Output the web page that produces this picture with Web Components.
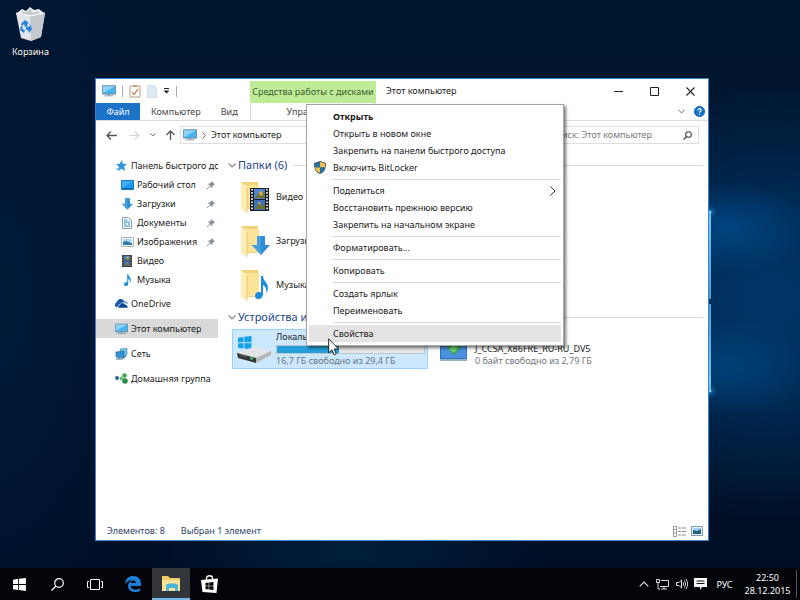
<!DOCTYPE html>
<html lang="ru">
<head>
<meta charset="utf-8">
<title>Этот компьютер</title>
<style>
html,body{height:100%;margin:0}
body{font:9px/12px "Noto Sans","Open Sans",sans-serif;color:#1a1a1a;overflow:hidden}
</style>
</head>
<body>
<win-desktop>
  <desktop-icon slot="icons" icon="bin">Корзина</desktop-icon>
  <explorer-window slot="windows"></explorer-window>
  <context-menu slot="menu">
    <menu-item strong>Открыть</menu-item>
    <menu-item>Открыть в новом окне</menu-item>
    <menu-item>Закрепить на панели быстрого доступа</menu-item>
    <menu-item icon="shield">Включить BitLocker</menu-item>
    <menu-line></menu-line>
    <menu-item submenu>Поделиться</menu-item>
    <menu-item>Восстановить прежнюю версию</menu-item>
    <menu-item>Закрепить на начальном экране</menu-item>
    <menu-line></menu-line>
    <menu-item>Форматировать...</menu-item>
    <menu-line></menu-line>
    <menu-item>Копировать</menu-item>
    <menu-line></menu-line>
    <menu-item>Создать ярлык</menu-item>
    <menu-item>Переименовать</menu-item>
    <menu-line></menu-line>
    <menu-item active>Свойства</menu-item>
  </context-menu>
  <ui-icon slot="cursor" name="cursor"></ui-icon>
  <task-bar slot="taskbar"></task-bar>
</win-desktop>
<script>
const folder = '<path d="M1 1h17v27H6z" fill="#f3d377"/><path d="M5 4h14v23H5z" fill="#fbe39a"/><path d="M1 1l6 5v26l-6-4z" fill="#ffeeb4"/><path d="M7 6v26" stroke="#e2bd5c" stroke-width=".7"/>';
const film = '<path d="M0 0h19v23H0z" fill="#1c1d22"/><path d="M4 1h11v10H4z" fill="#4d86cf"/><path d="M4 12h11v10H4z" fill="#3d72bd"/><path d="M5 10l3-4 3 1 3-4 1 7zM5 21l3-5 4 2 3-3v6z" fill="#6f7434"/><path d="M9 4l3-1 1 4-3 1zM7 15l3-1 1 3z" fill="#e0a63c"/><path d="M2 1v21M17 1v21" stroke="#e6e6e6" stroke-width="1.8" stroke-dasharray="1.6 1.5"/>';
const note = '<path d="M6 0h2c0 5 5 6 5 12 0 2-1 4-2 5 1-5-1-7-3-8v9c0 3-2 5-5 5-4 0-4-6 0-7 1 0 2 0 3 .5z" fill="#1c8ddb"/>';
const monitor = '<path d="M.5.5h15v9.500H.5z" fill="#44b3ef" stroke="#6b8394"/><path d="M1 1h14L1 9z" fill="#8bd5fb"/><path d="M7 10h2v1.500H7z" fill="#8698a4"/><path d="M3 12h10" stroke="#7d909e"/>';
const down = '<path d="M5 0h8v9h5l-9 10L0 9h5z" fill="#318dd3"/><path d="M5 0h4v19L0 9h5z" fill="#439fe2"/>';
const winlogo = '<path d="M0 2l6-1v6H0zM7 .9L15 0v7H7zM0 8h6v6l-6-1zM7 8h8v7l-8-1z"/>';
const ICONS = {
 bin:[32,36,'<path d="M2 7l5-4 4 2 4-4 4 3 5-1 5 4-2 4H4z" fill="#eef0f2"/><path d="M7 5l5 1 3-4 3 5 5-2 3 3-9 3-9-1z" fill="#c7ccd2"/><path d="M1 7l14 3 15-3-4 24-10 4-10-3z" fill="#e2e5e9"/><path d="M15 10l15-3-4 24-10 4z" fill="#c4c9d0"/><path d="M1 7l14 3 15-3" fill="none" stroke="#fff"/><path d="M6 18l4-4 4 3-2 1 1 2-3 1-1-3-2 2zM15 18l2 5-3 4-1-3h-2v-3h3zM6 20l2 1-1 2 3 1-1 3-4-3z" fill="#2484d6"/>'],
 monitor:[16,13,monitor],
 props:[12,13,'<path d="M1 1h10v11H1z" fill="#fff" stroke="#b59c86"/><path d="M4 0h4v2H4z" fill="#b6a48f"/><path d="M3 7l2 2.500L9 4" fill="none" stroke="#c97240" stroke-width="1.200"/>'],
 blank:[10,13,'<path d="M.5.5h7l2 2v10h-9z" fill="#dce8f2" stroke="#cfdbe6"/>'],
 drop:[7,6,'<path d="M1 .5h5" stroke="#222"/><path d="M.5 2.500h6l-3 3z" fill="#222"/>'],
 min:[9,9,'<path d="M0 4.500h9" stroke="#222"/>'],
 max:[9,9,'<path d="M.5.5h8v8h-8z" fill="none" stroke="#222"/>'],
 close:[9,9,'<path d="M.5.5l8 8M8.500.5l-8 8" stroke="#222" stroke-width="1.100"/>'],
 chev:[8,5,'<path d="M.5.5L4 4l3.500-3.500" fill="none" stroke="#888" stroke-width="1.200"/>'],
 chevr:[4,7,'<path d="M.5.5l3 3-3 3" fill="none" stroke="#666"/>'],
 sub:[6,10,'<path d="M.5.5L5 5 .5 9.500" fill="none" stroke="#333"/>'],
 help:[12,12,'<circle cx="6" cy="6" r="5.500" fill="#1775cc" stroke="#0c5ba6"/><path d="M4.200 4.700c0-2.500 3.600-2.300 3.600-.2 0 1.300-1.800 1.200-1.800 2.700M6 8.300v1.300" fill="none" stroke="#fff" stroke-width="1.200"/>'],
 back:[11,9,'<path d="M11 4.500H1M5 .5l-4 4 4 4" fill="none" stroke="#555" stroke-width="1.300"/>'],
 fwd:[11,9,'<path d="M0 4.500h10M6 .5l4 4-4 4" fill="none" stroke="#d4d4d4" stroke-width="1.200"/>'],
 smallchev:[6,4,'<path d="M.5.5L3 3 5.500.5" fill="none" stroke="#777"/>'],
 up:[9,10,'<path d="M4.500 10V1M.5 5l4-4 4 4" fill="none" stroke="#555" stroke-width="1.300"/>'],
 search:[9,9,'<circle cx="5.500" cy="3.500" r="2.800" fill="none" stroke="#444" stroke-width="1.100"/><path d="M3.500 5.500L.5 8.500" stroke="#444" stroke-width="1.300"/>'],
 star:[12,12,'<path d="M6 0l1.800 4 4.200.3-3.200 2.900L10 12 6 9.500 2.200 12l1-4.800L0 4.500 4.300 4z" fill="#2f93de"/><path d="M0 10h4" stroke="#2f93de"/>'],
 desk:[13,10,'<path d="M.5.5h12v9H.5z" fill="#1d9af0" stroke="#1479c4"/><path d="M1 1h11L1 8z" fill="#3fb0f8"/><path d="M1 8.500h11" stroke="#0d69ad"/>'],
 down:[18,19,down],
 doc:[10,12,'<path d="M.5.5h6l3 3v8h-9z" fill="#f2f8fc" stroke="#8ba2b3"/><path d="M2 3h3M2 5h6M2 7h2M2 9h6M6 7h2" stroke="#3a8cc8"/>'],
 image:[13,10,'<path d="M.5.5h12v9H.5z" fill="#fff" stroke="#a5b1ba"/><path d="M2 2h9v3H2z" fill="#a8d8f4"/><path d="M2 5l3-1 6 2v2H2z" fill="#3277a6"/>'],
 film:[19,23,film],
 note:[13,23,note],
 cloud:[13,9,'<path d="M2 8C-1 7 0 4 2 4c0-4 6-5 7-1 2-.5 3 1 3 2" fill="none" stroke="#0d4fa0"/><path d="M2 4c0-4 6-5 7-1L4 6 2 8C-1 7 0 4 2 4z" fill="#1659a9"/><path d="M4 9C2 8.500 3 6 5 6c0-2.500 4-3 5-.5 2-.5 4 3 2 3.500z" fill="#0b4695" stroke="#fff" stroke-width=".5"/>'],
 net:[13,12,'<path d="M5 1l7-1v7l-4 1z" fill="#7cc3ea" stroke="#3a83b3" stroke-width=".6"/><path d="M1 4l8-1v6.500L1 9z" fill="#2e93d4" stroke="#276e9f" stroke-width=".7"/><path d="M4 9v2M1 11h6l4-3" stroke="#477b9b" stroke-width="1.200" fill="none"/>'],
 group:[13,11,'<circle cx="2" cy="5" r="1.900" fill="#1c5f9c"/><circle cx="9.500" cy="2.500" r="2.300" fill="#41a559"/><circle cx="10" cy="8" r="2.800" fill="#2a8e49"/><circle cx="6.500" cy="5.500" r="2" fill="#6fbf72"/>'],
 pin:[8,8,'<path d="M4.500 0L8 3.500l-1 .3-1.500 1.500-.3 2L.8 2.800l2-.3L4.300 1z" fill="#8a9097"/><path d="M2.800 5.200L0 8" stroke="#8a9097"/>'],
 fvideo:[30,32,folder+'<g transform="translate(10 7)">'+film+'</g>'],
 fdown:[30,32,folder+'<g transform="translate(12 11)">'+down+'</g>'],
 fmusic:[30,32,folder+'<g transform="translate(15 7)">'+note+'</g>'],
 drive:[34,27,'<g transform="translate(1 0) scale(.9)" fill="#15a3e8">'+winlogo+'</g><path d="M0 17l16-6 18 4-15 8z" fill="#e3e4e5"/><path d="M0 17l19 5v5L1 22z" fill="#333537"/><path d="M19 22l15-7v4l-15 8z" fill="#b4b6b8"/><path d="M13 21l3 1v2l-3-1z" fill="#38d05b"/><path d="M3 19l7 2" stroke="#666"/>'],
 dvd:[27,24,'<path d="M0 0h27v24H0z" fill="#2f72c4"/><path d="M1 1h25v20H1z" fill="#4a90dc"/><path d="M0 22h27v2H0z" fill="#9badc0"/><path d="M6 9l7-8 8 9-7 8z" fill="#37a651"/><path d="M9 12l5 4 4-5-4-4z" fill="#70cb6d"/>'],
 shield:[12,13,'<path d="M6 0l6 2c0 5-1 9-6 11C1 11 0 7 0 2z" fill="#4b5963"/><path d="M6 1v5.500H1C.8 5 1 3.500 1 2.500z" fill="#2170b0"/><path d="M6 1l5 1.500v4H6z" fill="#f1c243"/><path d="M1 6.500h5V12C3 11 1.500 9 1 6.500z" fill="#f1c243"/><path d="M6 6.500h5C10.500 9 9 11 6 12z" fill="#2170b0"/>'],
 details:[13,11,'<path d="M.5.5h3v10h-3zM.5 3.500h3M.5 7h3" fill="none" stroke="#999"/><path d="M5 2h3M9 2h4M5 5.500h3M9 5.500h4M5 9h3M9 9h4" stroke="#888"/>'],
 tiles:[12,10,'<path d="M.5.5h11v9H.5z" fill="#e8f4fc" stroke="#7f9db5"/><path d="M2 2h8v3H2z" fill="#9dd2f0"/><path d="M2 4l4 1 4-2v5H2z" fill="#245f85"/>'],
 win:[13,13,'<g transform="scale(.86)" fill="#fff">'+winlogo+'</g>'],
 find:[13,13,'<circle cx="8" cy="5" r="4.300" fill="none" stroke="#fff" stroke-width="1.200"/><path d="M5 8L.5 12.500" stroke="#fff" stroke-width="1.300"/>'],
 task:[16,11,'<path d="M3.500.5h9v10h-9zM2 2.500H.5v6H2M14 2.500h1.500v6H14" fill="none" stroke="#fff"/>'],
 edge:[16,16,'<path d="M0 8C1 2 4 0 8 0c5 0 8 3 8 8v2H5.500c.5 4 6 4.500 9.500 2v3c-5 2.500-12 .5-12-5C3 7 5 5 7.500 4 5 4 2 5.500 0 8zm5.500-1H11c0-3.500-5-3.500-5.500 0z" fill="#1a7fd9"/>'],
 explorer:[18,15,'<path d="M0 0h6l2 2h10v13H0z" fill="#f0cc66"/><path d="M0 4h18v11H0z" fill="#fbe294"/><path d="M4 9l2-1.500h8L16 9v6h-3v-3H7v3H4z" fill="#4bb6d9"/>'],
 store:[17,18,'<path d="M5.500 5V3c0-3 6-3 6 0v2" fill="none" stroke="#fff" stroke-width="1.300"/><path d="M0 5l17-1.500-1.500 14.500-14-1z" fill="#fff"/><g transform="translate(4.500 7) scale(.53)" fill="#000">'+winlogo+'</g>'],
 tchev:[10,6,'<path d="M.7 5.300L5 1l4.300 4.300" fill="none" stroke="#ddd" stroke-width="1.200"/>'],
 lan:[13,12,'<path d="M5 2.500h7.500v6H4M8 9v2M5 11h6" fill="none" stroke="#ddd"/><path d="M.5 1.500h3v3h-3zM2 4.500V11h2" fill="none" stroke="#ddd"/>'],
 vol:[12,12,'<path d="M.5 4.500H3L5.500 2v8L3 7.500H.5z" fill="none" stroke="#ddd"/><path d="M7 4q1.300 2 0 4M8.500 2.500q2.300 3.500 0 7M10 1q3.300 5 0 10" fill="none" stroke="#ccc"/>'],
 chat:[13,12,'<path d="M0 0h13v9H8l-2 3V9H0z" fill="#fff"/><path d="M2.500 3h8M2.500 5.500h8" stroke="#111"/>'],
 cursor:[12,18,'<path d="M.7.8v14l3.200-3 2.200 5 2.200-1-2.200-4.800h4.400z" fill="#fff" stroke="#111" stroke-width=".9"/>']
};
const RESET = '*,:host{box-sizing:border-box}button{font:inherit;color:inherit;background:none;border:0;margin:0;padding:0;text-align:left;white-space:nowrap}';
function define(tag, css, html){
  customElements.define(tag, class extends HTMLElement{
    constructor(){
      super();
      const t=document.createElement('template');
      t.innerHTML='<style>'+RESET+css+'</style>'+(typeof html==='function'?html(this):html);
      this.attachShadow({mode:'open'}).append(t.content.cloneNode(true));
    }
  });
}
define('ui-icon',':host{display:inline-flex;flex:none}svg{display:block}',e=>{
  const [w,h,body]=ICONS[e.getAttribute('name')];
  return `<svg width="${e.getAttribute('w')||w}" height="${e.getAttribute('h')||h}" viewBox="0 0 ${w} ${h}" aria-hidden="true">${body}</svg>`;
});
define('win-desktop',`
:host{display:flex;flex-direction:column;height:100vh;position:relative;overflow:hidden;background:
 radial-gradient(circle 7px at 710px 212px,#8fdcff 0,#2d8fd066 30%,transparent 100%),
 radial-gradient(circle 7px at 710px 391px,#8fdcff 0,#2d8fd066 30%,transparent 100%),
 linear-gradient(#7ec8f0,#4a9bd6) 709px 211px/2px 88px no-repeat,
 linear-gradient(#4a9bd6,#7ec8f0) 709px 304px/2px 88px no-repeat,
 radial-gradient(ellipse 90px 45px at 725px 228px,#0059a488 0,transparent 100%),
 radial-gradient(ellipse 90px 50px at 725px 368px,#00589e77 0,transparent 100%),
 radial-gradient(ellipse 230px 220px at 770px 300px,#003768 0,#003364bb 45%,transparent 100%),
 radial-gradient(ellipse 200px 60px at 350px 552px,#001e3c 0,transparent 100%),
 radial-gradient(ellipse 160px 400px at 0 300px,#001a3b 0,transparent 100%),
 linear-gradient(#00162f,#001128 60%,#000e24)}
main{flex:1;padding:6px 4px}
.window{position:absolute;left:95px;right:91px;top:78px;bottom:59px;display:flex}
.menu{position:absolute;left:306px;top:104px}
.cursor{position:absolute;left:328px;top:338px}`,
'<main><slot name="icons"></slot></main><div class="window"><slot name="windows"></slot></div><slot name="taskbar"></slot><div class="menu"><slot name="menu"></slot></div><div class="cursor"><slot name="cursor"></slot></div>');
define('desktop-icon',`:host{display:inline-block;color:#fff}button{display:flex;flex-direction:column;align-items:center;gap:4px;width:53px;text-shadow:0 1px 2px #000}`,
 e=>`<button><ui-icon name="${e.getAttribute('icon')}"></ui-icon><slot></slot></button>`);
define('title-bar',`
:host{display:flex;align-items:center;height:24px}
.quick{display:flex;align-items:center;gap:6px;width:154px;padding-left:6px}
.quick i{width:1px;height:11px;background:#aaa}
.quick button,.ctl button{display:flex;align-items:center;justify-content:center}
.ctx{align-self:flex-end;height:22px;line-height:21px;width:126px;text-align:center;background:#bdeb96;color:#3f5c33;white-space:nowrap}
h1{font:inherit;margin:0;padding-left:10px;flex:1}
.ctl{display:flex}.ctl button{width:36px;height:22px}`,
`<div class="quick"><ui-icon name="monitor" w="14" h="12"></ui-icon><i></i><button aria-label="Свойства"><ui-icon name="props"></ui-icon></button><button aria-label="Новая папка"><ui-icon name="blank"></ui-icon></button><button aria-label="Настройка панели"><ui-icon name="drop"></ui-icon></button><i></i></div>
<div class="ctx">Средства работы с дисками</div><h1>Этот компьютер</h1>
<div class="ctl"><button aria-label="Свернуть"><ui-icon name="min"></ui-icon></button><button aria-label="Развернуть"><ui-icon name="max"></ui-icon></button><button aria-label="Закрыть"><ui-icon name="close"></ui-icon></button></div>`);
define('ribbon-tabs',`
:host{display:flex;height:18px;border-bottom:1px solid #dcdcdc;color:#444}
button{line-height:17px}
.file{width:44px;background:#1a73c7;color:#fff;text-align:center}
.a{padding:0 8px 0 11px}.b{padding:0 12px}
.c{width:126px;padding-left:36px;border-left:1px solid #ddd;border-right:1px solid #ddd}
.tools{margin-left:auto;display:flex;align-items:center;gap:9px;padding-right:3px}
.tools button{display:flex}`,
`<button class="file">Файл</button><button class="a">Компьютер</button><button class="b">Вид</button><button class="c">Управление</button>
<div class="tools"><button aria-label="Развернуть ленту"><ui-icon name="chev" w="7"></ui-icon></button><button aria-label="Справка"><ui-icon name="help" w="11" h="11"></ui-icon></button></div>`);
define('address-bar',`
:host{display:flex;align-items:center;height:28px;padding:0 9px 0 10px}
button{display:flex}
nav{display:flex;align-items:center;gap:12px;width:74px}
nav button:nth-child(n+3){margin-left:-2px}
.path{flex:1;height:18px;border:1px solid #dedede;display:flex;align-items:center;gap:5px;padding-left:2px}
.find{width:153px;height:18px;margin-left:7px;border:1px solid #dedede;display:flex;align-items:center;padding:0 6px 0 3px}
input{flex:1;min-width:0;border:0;outline:0;padding:0;background:none;font:inherit;color:#666}
input::placeholder{color:#777;opacity:1}`,
`<nav><button aria-label="Назад"><ui-icon name="back"></ui-icon></button><button aria-label="Вперёд"><ui-icon name="fwd"></ui-icon></button><button aria-label="Журнал"><ui-icon name="smallchev"></ui-icon></button><button aria-label="Вверх"><ui-icon name="up"></ui-icon></button></nav>
<div class="path"><ui-icon name="monitor" w="14" h="12"></ui-icon><ui-icon name="chevr"></ui-icon><button>Этот компьютер</button></div>
<div class="find"><input type="search" aria-label="Поиск" placeholder="Поиск: Этот компьютер"><button aria-label="Найти"><ui-icon name="search"></ui-icon></button></div>`);
define('nav-item',`
:host{display:block}:host([root]){margin-bottom:6px}:host([quick]){margin-bottom:0}
:host([selected]){background:#d9d9d9}
button{display:flex;align-items:center;width:100%;height:19px;padding-left:18px;overflow:hidden}
:host(:not([root])) button{padding-left:24px}
.i{width:14px;display:flex;justify-content:center;margin-right:3px;flex:none}
.t{flex:1;min-width:0;overflow:hidden}.pin{margin-right:3px}`,
 e=>`<button><span class="i"><ui-icon name="${e.getAttribute('icon')}" w="${e.getAttribute('w')||''}" h="${e.getAttribute('h')||''}"></ui-icon></span><span class="t"><slot></slot></span>${e.hasAttribute('pin')?'<ui-icon class="pin" name="pin"></ui-icon>':''}</button>`);
define('group-head',`
:host{display:flex;align-items:center;height:20px;gap:2px;color:#22438a;font-size:11px;line-height:16px}
ui-icon{margin-left:-2px}
h2{font:inherit;margin:0;white-space:nowrap}hr{flex:1;border:0;border-top:1px solid #ddd;margin:0 0 0 4px}`,
 '<ui-icon name="chev"></ui-icon><h2><slot></slot></h2><hr>');
define('folder-tile',`:host{display:block}button{display:flex;align-items:center;gap:6px;height:44px;padding-left:10px}`,
 e=>`<button><ui-icon name="${e.getAttribute('icon')}"></ui-icon><slot></slot></button>`);
define('drive-tile',`
:host{display:block;flex:0 0 196px;border:1px solid transparent}
:host([selected]){background:#cce8ff;border-color:#99d1ff}
button{display:flex;align-items:center;gap:5px;width:100%;height:38px;padding:0 2px 0 4px}
.i{width:34px;display:flex;justify-content:center}
.t{flex:1;display:flex;flex-direction:column}.sub{color:#6d7680}
.bar{height:9px;margin:2px 0 1px;background:#e6e6e6;border:1px solid #bcc6ce}.bar b{display:block;width:42%;height:100%;background:#26a0da}`,
 e=>`<button><span class="i"><ui-icon name="${e.getAttribute('icon')}"></ui-icon></span><span class="t"><slot></slot>${e.hasAttribute('bar')?'<span class="bar" role="progressbar" aria-label="Занято" aria-valuenow="42"><b></b></span>':''}<span class="sub">${e.getAttribute('info')}</span></span></button>`);
define('status-bar',`
:host{display:flex;align-items:center;height:18px;padding:0 5px 0 11px;gap:16px;color:#2c3f66}
.v{margin-left:auto;display:flex;gap:5px}button{display:flex}`,
`<span>Элементов: 8</span><span>Выбран 1 элемент</span><div class="v"><button aria-label="Таблица"><ui-icon name="details"></ui-icon></button><button aria-label="Плитка"><ui-icon name="tiles"></ui-icon></button></div>`);
define('explorer-window',`
:host{display:flex;flex-direction:column;flex:1;background:#fff;border:1px solid #2d86cf;min-width:0}
.body{flex:1;display:flex;min-height:0}
aside{flex:0 0 122px;min-width:0;padding-top:7px}
section{flex:1;padding:6px 5px 0 12px;min-width:0}
group-head{padding-left:0}
.drives{display:flex;gap:3px;padding-left:2px;margin-top:2px}
.gap{height:5px}`,
`<title-bar></title-bar><ribbon-tabs></ribbon-tabs><address-bar></address-bar>
<div class="body"><aside>
<nav-item root quick icon="star" w="11" h="11">Панель быстрого доступа</nav-item>
<nav-item icon="desk" pin>Рабочий стол</nav-item>
<nav-item icon="down" w="11" h="12" pin>Загрузки</nav-item>
<nav-item icon="doc" pin>Документы</nav-item>
<nav-item icon="image" pin>Изображения</nav-item>
<nav-item icon="film" w="10" h="12">Видео</nav-item>
<nav-item icon="note" w="7" h="12">Музыка</nav-item>
<div class="gap"></div>
<nav-item root icon="cloud">OneDrive</nav-item>
<nav-item root icon="monitor" w="13" h="12" selected>Этот компьютер</nav-item>
<nav-item root icon="net">Сеть</nav-item>
<nav-item root icon="group">Домашняя группа</nav-item>
</aside><section>
<group-head>Папки (6)</group-head>
<folder-tile icon="fvideo">Видео</folder-tile><folder-tile icon="fdown">Загрузки</folder-tile><folder-tile icon="fmusic">Музыка</folder-tile>
<group-head>Устройства и диски (2)</group-head>
<div class="drives"><drive-tile icon="drive" bar selected info="16,7 ГБ свободно из 29,4 ГБ">Локальный диск (C:)</drive-tile>
<drive-tile icon="dvd" info="0 байт свободно из 2,79 ГБ">DVD-дисковод (D:)<br>J_CCSA_X86FRE_RU-RU_DV5</drive-tile></div>
</section></div><status-bar></status-bar>`);
define('context-menu',`:host{display:block;width:258px;padding:3px 2px;background:#fff;border:1px solid #a6a6a6;box-shadow:2px 2px 3px #0008}`,'<div role="menu"><slot></slot></div>');
define('menu-item',`
:host{display:block}:host([active]){background:#e5e3e3}:host([strong]){font-weight:700}
button{display:flex;align-items:center;width:100%;height:17px;padding-right:5px}
.i{width:24px;padding-left:5px;display:flex}.t{flex:1}`,
 e=>`<button role="menuitem"><span class="i">${e.hasAttribute('icon')?'<ui-icon name="shield"></ui-icon>':''}</span><span class="t"><slot></slot></span>${e.hasAttribute('submenu')?'<ui-icon name="sub"></ui-icon>':''}</button>`);
define('menu-line',`:host{display:block;height:1px;margin:3px 0 2px 24px;background:#d9d9d9}`,'');
define('task-bar',`
:host{display:flex;height:32px;background:#020409;color:#fff;font-size:10px;line-height:13px}
button{display:flex;align-items:center;justify-content:center;width:38px;height:32px}
.on{background:#32363b;border-bottom:2px solid #76b9ed}
.tray{margin-left:auto;display:flex;align-items:center;padding-right:3px}
.tray button{width:19px}.tray .lang{width:29px;font-size:9px}
.tray .clock{width:57px;text-align:center;font-size:9px}
i{width:1px;height:28px;background:#555}`,
`<button aria-label="Пуск"><ui-icon name="win"></ui-icon></button><button aria-label="Поиск"><ui-icon name="find"></ui-icon></button><button aria-label="Представление задач"><ui-icon name="task"></ui-icon></button><button aria-label="Edge"><ui-icon name="edge"></ui-icon></button><button class="on" aria-label="Проводник"><ui-icon name="explorer"></ui-icon></button><button aria-label="Магазин"><ui-icon name="store"></ui-icon></button>
<div class="tray"><button aria-label="Скрытые значки"><ui-icon name="tchev"></ui-icon></button><button aria-label="Сеть"><ui-icon name="lan"></ui-icon></button><button aria-label="Громкость"><ui-icon name="vol"></ui-icon></button><button aria-label="Уведомления"><ui-icon name="chat"></ui-icon></button><button class="lang">РУС</button><button class="clock">22:50<br>28.12.2015</button><i></i></div>`);
</script>
</body>
</html>
